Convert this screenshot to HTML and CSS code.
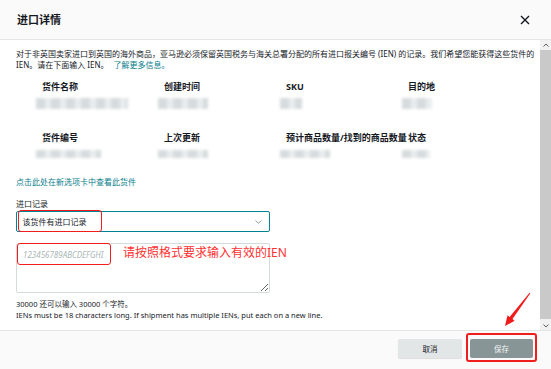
FILE: index.html
```html
<!DOCTYPE html>
<html>
<head>
    <meta charset="UTF-8">
    <title>进口详情</title>
    <link rel="stylesheet" href="styles.css">
</head>
<body>
    <div class="modal">
        <div class="modal-header">
            <h2>进口详情</h2>
            <svg class="close" viewBox="0 0 10 10" width="10" height="10">
                <path d="M1 1 L9 9 M9 1 L1 9" stroke="#16191f" stroke-width="1.4" fill="none"/>
            </svg>
        </div>

        <div class="modal-main">
            <div class="modal-body">
                <p class="intro">对于非英国卖家进口到英国的海外商品，亚马逊必须保留英国税务与海关总署分配的所有进口报关编号 (IEN) 的记录。我们希望您能获得这些货件的<br>IEN。请在下面输入 IEN。<a class="link">了解更多信息。</a></p>

                <div class="info-grid">
                    <div class="info-item">
                        <div class="info-label">货件名称</div>
                        <div class="info-value w-92"></div>
                    </div>
                    <div class="info-item">
                        <div class="info-label">创建时间</div>
                        <div class="info-value w-50"></div>
                    </div>
                    <div class="info-item">
                        <div class="info-label">SKU</div>
                        <div class="info-value w-22"></div>
                    </div>
                    <div class="info-item">
                        <div class="info-label">目的地</div>
                        <div class="info-value w-30"></div>
                    </div>
                    <div class="info-item">
                        <div class="info-label">货件编号</div>
                        <div class="info-value w-65 thin"></div>
                    </div>
                    <div class="info-item">
                        <div class="info-label">上次更新</div>
                        <div class="info-value w-50 thin"></div>
                    </div>
                    <div class="info-item">
                        <div class="info-label">预计商品数量/找到的商品数量</div>
                        <div class="info-value w-50 thin"></div>
                    </div>
                    <div class="info-item">
                        <div class="info-label">状态</div>
                        <div class="info-value w-28 thin"></div>
                    </div>
                </div>

                <a class="link view-link">点击此处在新选项卡中查看此货件</a>

                <div class="field-label">进口记录</div>
                <div class="select-wrap">
                    <div class="select">
                        <span>该货件有进口记录</span>
                        <svg viewBox="0 0 7 4" width="7" height="4">
                            <path d="M0.5 0.5 L3.5 3.3 L6.5 0.5" stroke="#879596" stroke-width="0.9" fill="none"/>
                        </svg>
                    </div>
                    <span class="mark mark-select"></span>
                </div>

                <div class="textarea-wrap">
                    <textarea class="ien-input" placeholder="123456789ABCDEFGHI"></textarea>
                    <span class="mark mark-input"></span>
                    <span class="hint-red">请按照格式要求输入有效的IEN</span>
                </div>

                <div class="help">
                    30000 还可以输入 30000 个字符。<br>
                    IENs must be 18 characters long. If shipment has multiple IENs, put each on a new line.
                </div>
            </div>

            <!-- 滚动条 -->
            <div class="scrollbar">
                <div class="sb-btn">
                    <svg viewBox="0 0 6 4" width="6" height="4"><path d="M0.5 3.5 L3 1 L5.5 3.5" stroke="#606060" stroke-width="1" fill="none"/></svg>
                </div>
                <div class="sb-thumb"></div>
                <div class="sb-btn">
                    <svg viewBox="0 0 6 4" width="6" height="4"><path d="M0.5 0.5 L3 3 L5.5 0.5" stroke="#606060" stroke-width="1" fill="none"/></svg>
                </div>
            </div>
        </div>

        <div class="modal-footer">
            <button class="btn btn-cancel">取消</button>
            <span class="save-wrap">
                <button class="btn btn-save">保存</button>
                <span class="mark mark-save"></span>
            </span>
        </div>

        <!-- 红色箭头标注 -->
        <svg class="arrow" viewBox="0 0 34 42" width="34" height="42">
            <polygon points="29.6,4.7 30.4,5.3 12.5,31.1 14.6,32.8 5,38 7.5,27.3 9.6,28.9" fill="#f21b1b"/>
        </svg>
    </div>
</body>
</html>
```

FILE: styles.css
```css
html, body {
    margin: 0;
    padding: 0;
}

body {
    font-family: "Noto Sans", "Noto Sans CJK SC", sans-serif;
    color: #16191f;
    background-color: #fff;
}

.modal {
    position: relative;
    width: 551px;
    height: 369px;
    display: flex;
    flex-direction: column;
    overflow: hidden;
}

.modal-header {
    height: 40px;
    box-sizing: border-box;
    flex-shrink: 0;
    display: flex;
    align-items: center;
    justify-content: space-between;
    padding: 0 21px 0 17px;
    background-color: #fafafa;
    border-bottom: 1px solid #e3e6e6;
}

.modal-header h2 {
    margin: 0;
    font-size: 11px;
    font-weight: 700;
    line-height: 14px;
}

.modal-main {
    flex: 1;
    min-height: 0;
    display: flex;
}

.modal-body {
    flex: 1;
    min-width: 0;
    overflow: hidden;
    padding: 8px 4px 0 16px;
    font-size: 8px;
    line-height: 11px;
}

/* 滚动条样式 */
.scrollbar {
    width: 11px;
    flex-shrink: 0;
    display: flex;
    flex-direction: column;
    background-color: #f1f1f1;
}

.sb-btn {
    height: 9px;
    display: flex;
    align-items: center;
    justify-content: center;
}

.sb-thumb {
    flex: 1;
    margin: 1px 0 2px;
    background-color: #c9c9c9;
}

.intro {
    margin: 0;
}

.link {
    color: #0a7d8c;
    cursor: pointer;
}

.intro .link {
    margin-left: 5px;
}

.info-grid {
    display: grid;
    grid-template-columns: repeat(4, 122px);
    row-gap: 23px;
    margin-top: 11px;
    padding-left: 20px;
}

.info-label {
    padding-left: 6px;
    font-size: 9px;
    font-weight: 700;
    line-height: 12px;
    white-space: nowrap;
}

.info-value {
    height: 11px;
    margin-top: 5px;
    background: repeating-linear-gradient(90deg, #d6dbdd 0 9px, #eaedee 9px 15px);
    filter: blur(1.5px);
}

.info-value.thin {
    height: 8px;
    margin-top: 6px;
}

.w-92 { width: 92px; }
.w-65 { width: 65px; }
.w-50 { width: 50px; }
.w-30 { width: 30px; }
.w-28 { width: 28px; }
.w-22 { width: 22px; }

.view-link {
    display: block;
    margin-top: 18px;
}

.field-label {
    margin-top: 11px;
}

.select-wrap {
    position: relative;
    width: 254px;
    margin-top: 2px;
}

.select {
    height: 21px;
    box-sizing: border-box;
    display: flex;
    align-items: center;
    justify-content: space-between;
    padding: 0 7px 0 5.5px;
    border: 1.5px solid #008296;
    border-radius: 2px;
    background-color: #fff;
}

.textarea-wrap {
    position: relative;
    width: 254px;
    margin-top: 11px;
}

.ien-input {
    display: block;
    width: 254px;
    height: 50px;
    box-sizing: border-box;
    margin: 0;
    padding: 5px 6px;
    border: 1px solid #d5dbdb;
    border-radius: 2px;
    font-family: "Noto Sans", "Noto Sans CJK SC", sans-serif;
    font-size: 8px;
    line-height: 11px;
}

.ien-input::placeholder {
    color: #aab7b8;
    font-style: italic;
}

.help {
    margin-top: 6px;
    font-size: 7.5px;
    line-height: 11px;
}

/* 红色标注 */
.mark {
    position: absolute;
    border: 1.5px solid #f01d1d;
    border-radius: 3px;
    box-sizing: border-box;
    pointer-events: none;
}

.mark-select {
    left: 2px;
    top: -1px;
    width: 84px;
    height: 22px;
}

.mark-input {
    left: 1px;
    top: 0;
    width: 94px;
    height: 22px;
}

.hint-red {
    position: absolute;
    left: 107px;
    top: 2px;
    font-size: 12px;
    line-height: 16px;
    color: #ff3131;
    white-space: nowrap;
}

.modal-footer {
    height: 39px;
    box-sizing: border-box;
    flex-shrink: 0;
    display: flex;
    justify-content: flex-end;
    align-items: flex-start;
    gap: 8px;
    padding: 8px 18px 0 0;
    background-color: #fafafa;
    border-top: 1px solid #e3e6e6;
}

.btn {
    height: 19px;
    padding: 0;
    border: none;
    border-radius: 2px;
    font-family: "Noto Sans", "Noto Sans CJK SC", sans-serif;
    font-size: 7.5px;
    cursor: pointer;
}

.btn-cancel {
    width: 64px;
    background-color: #e3e6e6;
    color: #16191f;
    box-shadow: 0 1px 1px rgba(0,0,0,0.12);
}

.save-wrap {
    position: relative;
    display: block;
}

.btn-save {
    display: block;
    width: 63px;
    background-color: #879596;
    color: #f2f3f3;
}

.mark-save {
    top: -6px;
    left: -4px;
    right: -4px;
    bottom: -4px;
    border-width: 2px;
}

.arrow {
    position: absolute;
    left: 500px;
    top: 288px;
}
```
